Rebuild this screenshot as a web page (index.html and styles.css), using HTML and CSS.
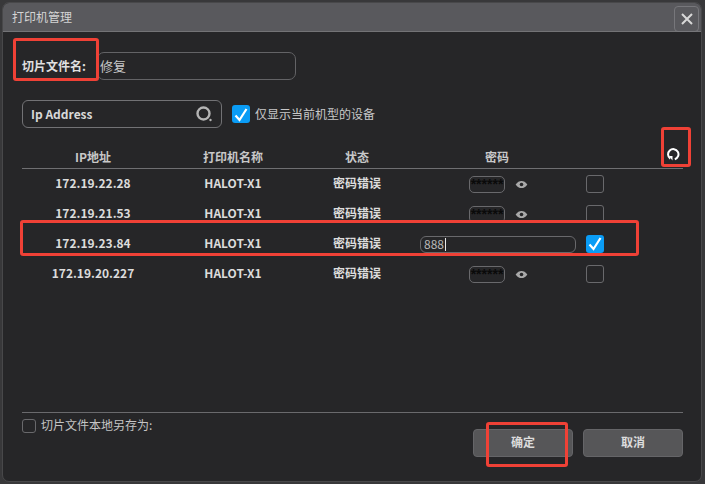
FILE: index.html
```html
<!DOCTYPE html>
<html lang="zh">
<head>
<meta charset="utf-8">
<title>打印机管理</title>
<link rel="stylesheet" href="styles.css">
</head>
<body>
<div class="dialog">
  <header class="titlebar">
    <span class="title">打印机管理</span>
    <button class="close" aria-label="关闭">
      <svg width="12" height="12" viewBox="0 0 12 12"><path d="M1 1l10 10M11 1L1 11" stroke="#d8d8d8" stroke-width="2" fill="none"/></svg>
    </button>
  </header>
  <main class="content">
    <div class="name-row">
      <label class="name-label"><span class="lift">切片文件名:</span></label>
      <div class="name-input">修复</div>
    </div>
    <div class="search-row">
      <div class="search">
        <span class="lift">Ip Address</span>
        <svg width="18" height="18" viewBox="0 0 18 18"><circle cx="8.500" cy="8.500" r="6" stroke="#b4b4b4" stroke-width="2.400" fill="none"/><circle cx="15.500" cy="15" r="1.200" fill="#b4b4b4"/></svg>
      </div>
      <span class="check checked big"><svg width="18" height="18" viewBox="0 0 18 18"><path d="M3.500 9.500l4 4.500 7-11" stroke="#fff" stroke-width="2.200" fill="none"/></svg></span>
      <span class="only"><span class="lift">仅显示当前机型的设备</span></span>
    </div>
    <div class="table">
      <div class="row head">
        <span>IP地址</span><span>打印机名称</span><span>状态</span><span>密码</span><span></span>
      </div>
      <div class="row">
        <span class="cell">172.19.22.28</span><span class="cell">HALOT-X1</span><span class="cell">密码错误</span>
        <span class="pw"><span class="pw-box">******</span><svg class="eye" width="13" height="9" viewBox="0 0 14 10"><path d="M.5 5C2.500 2 4.500 1 7 1s4.500 1 6.500 4C11.500 8 9.500 9 7 9S2.500 8 .5 5z" fill="#a8a8a8"/><circle cx="7" cy="5" r="2" fill="#262628"/></svg></span>
        <span class="check"></span>
      </div>
      <div class="row">
        <span class="cell">172.19.21.53</span><span class="cell">HALOT-X1</span><span class="cell">密码错误</span>
        <span class="pw"><span class="pw-box">******</span><svg class="eye" width="13" height="9" viewBox="0 0 14 10"><path d="M.5 5C2.500 2 4.500 1 7 1s4.500 1 6.500 4C11.500 8 9.500 9 7 9S2.500 8 .5 5z" fill="#a8a8a8"/><circle cx="7" cy="5" r="2" fill="#262628"/></svg></span>
        <span class="check"></span>
      </div>
      <div class="row">
        <span class="cell">172.19.23.84</span><span class="cell">HALOT-X1</span><span class="cell">密码错误</span>
        <span class="pw"><span class="pw-wide"><span class="lift">888</span><i class="caret"></i></span></span>
        <span class="check checked"><svg width="18" height="18" viewBox="0 0 18 18"><path d="M3.500 9.500l4 4.500 7-11" stroke="#fff" stroke-width="2.200" fill="none"/></svg></span>
      </div>
      <div class="row">
        <span class="cell">172.19.20.227</span><span class="cell">HALOT-X1</span><span class="cell">密码错误</span>
        <span class="pw"><span class="pw-box">******</span><svg class="eye" width="13" height="9" viewBox="0 0 14 10"><path d="M.5 5C2.500 2 4.500 1 7 1s4.500 1 6.500 4C11.500 8 9.500 9 7 9S2.500 8 .5 5z" fill="#a8a8a8"/><circle cx="7" cy="5" r="2" fill="#262628"/></svg></span>
        <span class="check"></span>
      </div>
    </div>
    <div class="footer">
      <div class="save-as">
        <span class="check small"></span>
        <span class="save-text">切片文件本地另存为:</span>
      </div>
      <div class="buttons">
        <button class="btn">确定</button>
        <button class="btn">取消</button>
      </div>
    </div>
  </main>
  <svg class="refresh" width="14" height="14" viewBox="0 0 14 14"><path d="M8.800 12.300A5.200 5.200 0 1 0 4.300 11.600" stroke="#fff" stroke-width="2" fill="none"/><path d="M3 9h3.500v4.500z" fill="#fff"/></svg>
  <div class="mark mark-name"></div>
  <div class="mark mark-refresh"></div>
  <div class="mark mark-row"></div>
  <div class="mark mark-ok"></div>
</div>
</body>
</html>
```
FILE: styles.css
```css
* { box-sizing: border-box; }
html, body { margin: 0; height: 100%; }
body {
  width: 705px;
  height: 484px;
  overflow: hidden;
  background: #38383a;
  padding: 2px 3px 2px 2px;
  font-family: "Noto Sans CJK SC", "Noto Sans", sans-serif;
  color: #dcdcdc;
}
.dialog {
  position: relative;
  width: 700px;
  height: 480px;
  background: #262628;
  border: 1px solid #48484a;
  border-radius: 7px;
  display: flex;
  flex-direction: column;
  overflow: hidden;
}
.titlebar {
  height: 29px;
  flex: none;
  background: #59595d;
  border-bottom: 1px solid #737376;
  display: flex;
  align-items: center;
  justify-content: space-between;
  padding: 0 2px 0 9px;
}
.title { font-size: 12px; color: #d4d4d4; padding-bottom: 2px; }
.close {
  width: 25px;
  height: 26px;
  padding: 0;
  margin-top: 3px;
  background: transparent;
  border: 1px solid #77777b;
  border-radius: 4px;
  display: flex;
  align-items: center;
  justify-content: center;
}
.content {
  flex: 1;
  display: flex;
  flex-direction: column;
  padding: 20px 18px 0 19px;
}
.lift { display: block; padding-bottom: 2px; }
.name-row { display: flex; align-items: center; height: 28px; }
.name-label { width: 75px; font-size: 12px; font-weight: 700; color: #e0e0e0; white-space: nowrap; }
.name-input {
  width: 199px;
  height: 28px;
  border: 1px solid #636366;
  border-radius: 7px;
  padding-left: 2px;
  font-size: 13px;
  line-height: 25px;
  color: #c8c8c8;
}
.search-row { display: flex; align-items: center; margin-top: 20px; height: 28px; }
.search {
  width: 200px;
  height: 28px;
  border: 1px solid #727275;
  border-radius: 6px;
  padding: 0 8px 0 8px;
  display: flex;
  align-items: center;
  justify-content: space-between;
  font-size: 12px;
  font-weight: 700;
  color: #d8d8d8;
}
.check {
  width: 18px;
  height: 18px;
  flex: none;
  display: block;
  border: 1px solid #69696c;
  border-radius: 3px;
}
.check.checked { background: #0a9cf5; border: 0; }
.check.big { margin-left: 10px; }
.check.small { width: 14px; height: 14px; }
.only { margin-left: 5px; font-size: 12px; color: #c8c8c8; }
.table { margin-top: 16px; }
.row {
  display: grid;
  grid-template-columns: 142px 138px 110px 170px 18px;
  height: 30px;
  align-items: center;
  font-size: 12px;
  font-weight: 700;
  color: #dcdcdc;
  text-align: center;
}
.row.head {
  height: 25px;
  border-bottom: 1px solid #6f6f72;
  color: #c8c8c8;
}
.cell { padding-bottom: 4px; }
.row .check { justify-self: start; margin-left: 4px; }
.pw { display: flex; align-items: center; height: 18px; }
.pw-box {
  margin-left: 57px;
  width: 36px;
  height: 17px;
  border: 1px solid #69696c;
  border-radius: 5px;
  color: #0a0a0a;
  font-family: "Liberation Sans", sans-serif;
  font-size: 14px;
  font-weight: 700;
  line-height: 15px;
  text-align: center;
  overflow: hidden;
}
.eye { margin-left: 10px; }
.pw-wide {
  margin-left: 8px;
  width: 156px;
  height: 17px;
  border: 1px solid #69696c;
  border-radius: 6px;
  padding-left: 3px;
  font-size: 12px;
  font-weight: 400;
  line-height: 15px;
  color: #b8b8b8;
  text-align: left;
  display: flex;
  align-items: center;
}
.caret { width: 1px; height: 13px; background: #e8e8e8; margin-left: 1px; }
.footer {
  margin-top: 123px;
  border-top: 1px solid #6a6a6d;
  display: flex;
  justify-content: space-between;
}
.save-as {
  display: flex;
  align-items: center;
  gap: 5px;
  height: 14px;
  margin-top: 6px;
  font-size: 12px;
  color: #c4c4c4;
}
.save-text { padding-bottom: 3px; }
.buttons { display: flex; gap: 10px; margin-top: 16px; }
.btn {
  width: 100px;
  height: 28px;
  padding: 0 0 3px;
  background: #565658;
  border: 1px solid #656568;
  border-radius: 4px;
  font-family: inherit;
  font-size: 12px;
  font-weight: 700;
  color: #dcdcdc;
}
.refresh { position: absolute; left: 663px; top: 144px; }
.mark {
  position: absolute;
  border: 3px solid #ef4136;
  border-radius: 3px;
  pointer-events: none;
}
.mark-name { left: 10px; top: 35px; width: 86px; height: 43px; }
.mark-refresh { left: 658px; top: 124px; width: 30px; height: 40px; }
.mark-row { left: 17px; top: 217px; width: 619px; height: 36px; }
.mark-ok { left: 483px; top: 419px; width: 82px; height: 45px; }
```
